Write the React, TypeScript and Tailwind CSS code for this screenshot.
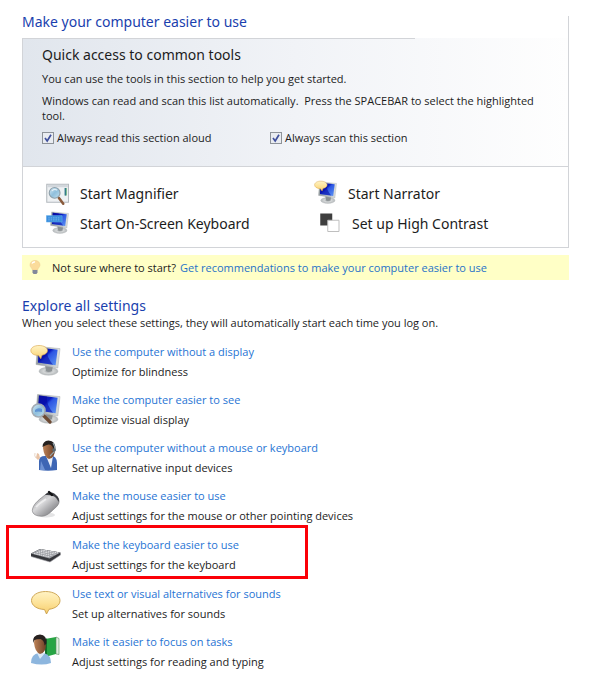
import { useState } from "react";
import type { ReactNode } from "react";

// shared gradients for all the icons
function IconDefs() {
  return (
    <svg className="absolute size-0" aria-hidden="true">
      <defs>
        <linearGradient id="screen" x1="0" y1="0" x2="1" y2="1">
          <stop offset="0" stopColor="#1016a0" />
          <stop offset="0.4" stopColor="#0a1cc0" />
          <stop offset="0.5" stopColor="#2c55e2" />
          <stop offset="1" stopColor="#5f97f4" />
        </linearGradient>
        <linearGradient id="frame" x1="0" y1="0" x2="1" y2="0">
          <stop offset="0" stopColor="#8f979d" />
          <stop offset="1" stopColor="#dfe2e2" />
        </linearGradient>
        <linearGradient id="bubble" x1="0" y1="0" x2="0" y2="1">
          <stop offset="0" stopColor="#fff3c4" />
          <stop offset="0.5" stopColor="#fde39a" />
          <stop offset="1" stopColor="#f6cd6c" />
        </linearGradient>
        <radialGradient id="stand">
          <stop offset="0" stopColor="#8f9497" />
          <stop offset="0.5" stopColor="#d4d7d8" />
          <stop offset="1" stopColor="#b4b8ba" />
        </radialGradient>
        <linearGradient id="lens" x1="0" y1="0" x2="1" y2="1">
          <stop offset="0" stopColor="#d9edf8" />
          <stop offset="0.5" stopColor="#8fbfdc" />
          <stop offset="1" stopColor="#c4e2f0" />
        </linearGradient>
        <linearGradient id="silver" x1="0" y1="0" x2="1" y2="1">
          <stop offset="0" stopColor="#8d8d90" />
          <stop offset="0.4" stopColor="#d8d8da" />
          <stop offset="0.65" stopColor="#a4a4a7" />
          <stop offset="1" stopColor="#5f5f63" />
        </linearGradient>
        <linearGradient id="skin" x1="0" y1="0" x2="1" y2="0">
          <stop offset="0" stopColor="#bd8257" />
          <stop offset="1" stopColor="#6d4026" />
        </linearGradient>
      </defs>
    </svg>
  );
}

function Icon({ className, children }: { className: string; children: ReactNode }) {
  return (
    <svg viewBox="0 0 32 32" className={`shrink-0 ${className}`} aria-hidden="true">
      {children}
    </svg>
  );
}

const Monitor = () => (
  <>
    <ellipse cx="18.5" cy="27.2" rx="9.5" ry="4" fill="url(#stand)" stroke="#b9bdbf" strokeWidth=".5" />
    <path d="M15 21l8 1-1 5q-3 1.500-6 0z" fill="#8b9194" />
    <path d="M7.500 2.500L30 4.600 27.800 24 6 20.500z" fill="url(#frame)" stroke="#a6abad" strokeWidth=".5" />
    <path d="M9 3.600L27.600 5.800 25.600 21.200 8 18.600z" fill="url(#screen)" />
    <path d="M9 3.600l8 1q-1 8 6 16.200L8 18.600z" fill="#0508a0" opacity=".55" />
  </>
);

const NarratorIcon = ({ className }: { className: string }) => (
  <Icon className={className}>
    <Monitor />
    <path
      d="M9 1.500c5 0 8.500 2.200 8.500 5 0 2.400-2.400 4.200-5.500 4.700L10.800 14.800 8.500 11.500C3.800 11.400.8 9.300.8 6.500c0-2.800 3.400-5 8.200-5z"
      fill="url(#bubble)"
      stroke="#d9a548"
      strokeWidth=".6"
    />
  </Icon>
);

const SeeIcon = ({ className }: { className: string }) => (
  <Icon className={className}>
    <Monitor />
    <path d="M13 23l7 7" stroke="#6d4a34" strokeWidth="3.200" strokeLinecap="round" />
    <circle cx="8.500" cy="18.500" r="6.500" fill="url(#lens)" stroke="#a3acb4" strokeWidth="1.600" />
    <path d="M5 18q3-3 7-1v3q-4-1-7 0z" fill="#4c83cf" opacity=".75" />
  </Icon>
);

const MagnifierIcon = ({ className }: { className: string }) => (
  <Icon className={className}>
    <path d="M1 3h29v24H1z" fill="#eef1f3" stroke="#b4b9be" strokeWidth="1.400" />
    <path d="M2 4h27v3H2z" fill="#d2d7dc" />
    <path d="M25 8h2.500v10H25z" fill="#3f9c57" />
    <path d="M25 8h1.200v10H25z" fill="#2e68a8" />
    <path d="M17 21l6 8" stroke="#8a5b3c" strokeWidth="3.400" strokeLinecap="round" />
    <circle cx="11.500" cy="14.500" r="7.200" fill="url(#lens)" stroke="#8fa0aa" strokeWidth="1.500" />
    <path d="M8 12q3-4 7-1" fill="none" stroke="#fff" strokeWidth="1.500" opacity=".7" />
  </Icon>
);

const OnScreenIcon = ({ className }: { className: string }) => (
  <Icon className={className}>
    <Monitor />
    <path d="M.5 7.500h21v8.500H.5z" fill="#3a8ede" stroke="#62acea" strokeWidth=".8" />
    <path
      d="M3 10.500h16M3 13.200h16"
      stroke="#7ab8ee"
      strokeWidth="1.200"
      strokeDasharray="2 1.200"
    />
  </Icon>
);

const ContrastIcon = ({ className }: { className: string }) => (
  <Icon className={className}>
    <path d="M3 2h16v16H3z" fill="#3e3e3e" />
    <path d="M13 11h15v15H13z" fill="#fff" stroke="#bdbdbd" strokeWidth="1.300" />
  </Icon>
);

const HeadsetIcon = ({ className }: { className: string }) => (
  <Icon className={className}>
    <path d="M9 30V21q0-5 6-5l5-1q7 1 7 8v7q-9 1.500-18 0z" fill="#3e66b4" />
    <path d="M16 16l5 12 2-12z" fill="#e8eef8" />
    <path d="M10 30l1-9 4 9z" fill="#6f93d4" />
    <path d="M13 8q0-6 6-6t6 7q0 9-6 10-5-2-6-11z" fill="url(#skin)" />
    <path d="M12.500 7q0-6 6-6.500 7.500 0 7 10l-2-1q-1-5-5-5-3 .5-6 2.500z" fill="#26211f" />
    <path d="M23 3q3 5 1 9l-4 4" fill="none" stroke="#93a4ac" strokeWidth="1.200" />
    <circle cx="24" cy="10" r="1.800" fill="#5d6970" />
    <path d="M7 13l2 1 1 4-2 2-2-2z" fill="#e8c3a6" />
    <path d="M5 13q-1 3 1 5" fill="none" stroke="#e8d6c8" />
  </Icon>
);

const MouseIcon = ({ className }: { className: string }) => (
  <Icon className={className}>
    <ellipse cx="16" cy="27" rx="9" ry="2.500" fill="#e4e4e5" />
    <path
      d="M2.500 21C4 15 10 11 15 7c3-2 9-1 12 2 4 4 2 8-3 12-5 5-9 8-14 7-5 0-8.500-3-7.500-7z"
      fill="url(#silver)"
      stroke="#77777a"
      strokeWidth=".6"
    />
    <path d="M15 7c3-4 8-3 11 0q4 3 2.500 7-2-5-5.500-6-4-1.500-8-1z" fill="#3c3d42" />
    <path d="M19 4l3 3" stroke="#101012" strokeWidth="2.400" strokeLinecap="round" />
    <path d="M6 19c3-4 6-5 10-8" fill="none" stroke="#fff" strokeWidth="2" opacity=".6" />
  </Icon>
);

const KeyboardIcon = ({ className }: { className: string }) => (
  <Icon className={className}>
    <path d="M1 16.500L10 12l20.500 3.500v2.500L20 25 1 19.500z" fill="#35363b" />
    <path d="M1 16.500L10 12l20.500 3.500L19.500 21.500z" fill="#9c9ea3" />
    <path
      d="M4 16.500l16 3.500M6.500 15.200l16 3.400M8.500 14l17 3.200M11 13l17 2.900"
      stroke="#e2e3e6"
      strokeWidth="1"
      strokeDasharray="1.600 .7"
    />
    <path d="M1 19.500L20 25l10.500-7" fill="none" stroke="#a4a5aa" strokeWidth=".6" />
  </Icon>
);

const SoundIcon = ({ className }: { className: string }) => (
  <Icon className={className}>
    <path
      d="M15.500 5.500c8.500 0 14.500 4 14.500 9 0 4.600-4.600 8-11 8.800L16.500 28l-2-4.500C7 23.300 1.500 19.500 1.500 14.500c0-5 6-9 14-9z"
      fill="url(#bubble)"
      stroke="#c99f4a"
      strokeWidth=".9"
    />
  </Icon>
);

const FocusIcon = ({ className }: { className: string }) => (
  <Icon className={className}>
    <path d="M15 5l11-2v17l-11 3z" fill="#27a544" />
    <path d="M26 3l3 1.500v16L26 20z" fill="#dff0e0" stroke="#5a8b60" strokeWidth=".6" />
    <path d="M15 5l2-.4v18l-2 .4z" fill="#0f6f29" />
    <path d="M1 29q0-9 8-10l5 0q7 2 7 10-9 3-20 0z" fill="#8db6de" />
    <path d="M7 19l3 6 5-6z" fill="#dbe9f5" />
    <path d="M4 9q0-7 6-7t6 8q0 9-6 10-5-2-6-11z" fill="url(#skin)" />
    <path d="M3 9q-1-8 7-8.500 7 .5 6.500 9l-2 2q0-5-4-6.500-4 0-6 1z" fill="#27211f" />
  </Icon>
);

const BulbIcon = ({ className }: { className: string }) => (
  <Icon className={className}>
    <path d="M16 3c6 0 10 4 10 9 0 4-4 6-5 10H11c-1-4-5-6-5-10 0-5 4-9 10-9z" fill="#fbdc9b" stroke="#ecc98c" />
    <path d="M10 9q2-4 6-3" fill="none" stroke="#fff" strokeWidth="3" />
    <path d="M11 22h10v5l-2 3h-6l-2-3z" fill="#82889a" />
  </Icon>
);

const settings = [
  { icon: NarratorIcon, title: "Use the computer without a display", text: "Optimize for blindness" },
  { icon: SeeIcon, title: "Make the computer easier to see", text: "Optimize visual display" },
  { icon: HeadsetIcon, title: "Use the computer without a mouse or keyboard", text: "Set up alternative input devices" },
  { icon: MouseIcon, title: "Make the mouse easier to use", text: "Adjust settings for the mouse or other pointing devices" },
  { icon: KeyboardIcon, title: "Make the keyboard easier to use", text: "Adjust settings for the keyboard", marked: true },
  { icon: SoundIcon, title: "Use text or visual alternatives for sounds", text: "Set up alternatives for sounds" },
  { icon: FocusIcon, title: "Make it easier to focus on tasks", text: "Adjust settings for reading and typing" },
];

function Check({ id, label }: { id: string; label: string }) {
  const [on, setOn] = useState(true);
  return (
    <div className="flex items-center gap-[3px]">
      <span className="relative flex size-3">
        <input
          id={id}
          type="checkbox"
          checked={on}
          onChange={(e) => setOn(e.target.checked)}
          className="size-3 appearance-none border border-[#8e9399] bg-[#e9ecf1]"
        />
        {on && (
          <svg viewBox="0 0 12 12" className="pointer-events-none absolute inset-0 size-3" aria-hidden="true">
            <path d="M3 6l2.200 3L9 2.800" fill="none" stroke="#3f4f9c" strokeWidth="1.700" />
          </svg>
        )}
      </span>
      <label htmlFor={id}>{label}</label>
    </div>
  );
}

export default function App() {
  return (
    <main className="min-h-screen bg-white pt-3 pr-[31px] pb-3 pl-[22px] font-['Open_Sans','Noto_Sans',sans-serif] text-[11px] leading-[15px] text-[#1c1c1c]">
      <IconDefs />
      <h1 className="font-['Noto_Sans',sans-serif] text-[14px] leading-5 text-[#1a3fae]">
        Make your computer easier to use
      </h1>

      <section className="relative mt-[6px] border-x border-b border-[#d2d4d8]">
        {/* the top edge stops early, the right edge runs on above the box */}
        <div className="absolute top-0 left-0 h-px w-[72%] bg-[#d2d4d8]" />
        <div className="absolute -top-[22px] -right-px h-[22px] w-px bg-[#d2d4d8]" />
        <div className="border-b border-[#d2d4d8] bg-linear-to-r from-[#e1e6ed] via-[#f1f3f7] to-[#fefefe] px-[19px] pt-[7px] pb-[21px]">
          <h2 className="font-['Noto_Sans',sans-serif] text-[14px] leading-5">Quick access to common tools</h2>
          <p className="mt-[6px]">You can use the tools in this section to help you get started.</p>
          <p className="mt-[7px] whitespace-pre-wrap">
            {"Windows can read and scan this list automatically.  Press the SPACEBAR to select the highlighted tool."}
          </p>
          <div className="mt-[7px] grid grid-cols-[228px_1fr]">
            <Check id="read" label="Always read this section aloud" />
            <Check id="scan" label="Always scan this section" />
          </div>
        </div>
        <div className="grid grid-cols-[268px_1fr] pt-3 pb-2 pl-[23px] font-['Noto_Sans',sans-serif] text-[14px] leading-[30px]">
          <button type="button" className="flex items-center gap-[10px]">
            <MagnifierIcon className="size-6" />
            Start Magnifier
          </button>
          <button type="button" className="flex items-center gap-[10px]">
            <NarratorIcon className="mb-1 size-6" />
            Start Narrator
          </button>
          <button type="button" className="flex items-center gap-[10px]">
            <OnScreenIcon className="mb-1 size-6" />
            Start On-Screen Keyboard
          </button>
          <button type="button" className="flex items-center gap-[10px] pl-1">
            <ContrastIcon className="size-6" />
            Set up High Contrast
          </button>
        </div>
      </section>

      <div className="mt-[7px] flex items-center bg-[#ffffc6] pt-1 pb-[5px] pl-[5px]">
        <BulbIcon className="size-4" />
        <span className="ml-[9px]">Not sure where to start?</span>
        <a href="#recommendations" className="ml-1 text-[#1f72c8]">
          Get recommendations to make your computer easier to use
        </a>
      </div>

      <h2 className="mt-[17px] font-['Noto_Sans',sans-serif] text-[14px] leading-[18px] text-[#1a3fae]">
        Explore all settings
      </h2>
      <p>When you select these settings, they will automatically start each time you log on.</p>
      <ul className="mt-2">
        {settings.map(({ icon: RowIcon, title, text, marked }) => (
          <li key={title} className={`relative flex h-12 items-center gap-[10px] pl-2 ${marked ? "my-px" : ""}`}>
            <RowIcon className="mb-1 size-8" />
            <div>
              <a href="#setting" className="block leading-5 text-[#1f74d4]">{title}</a>
              <p className="leading-5">{text}</p>
            </div>
            {marked && (
              <div className="pointer-events-none absolute -top-[6px] bottom-0 -left-4 w-[302px] border-3 border-[#fb0007]" />
            )}
          </li>
        ))}
      </ul>
    </main>
  );
}
